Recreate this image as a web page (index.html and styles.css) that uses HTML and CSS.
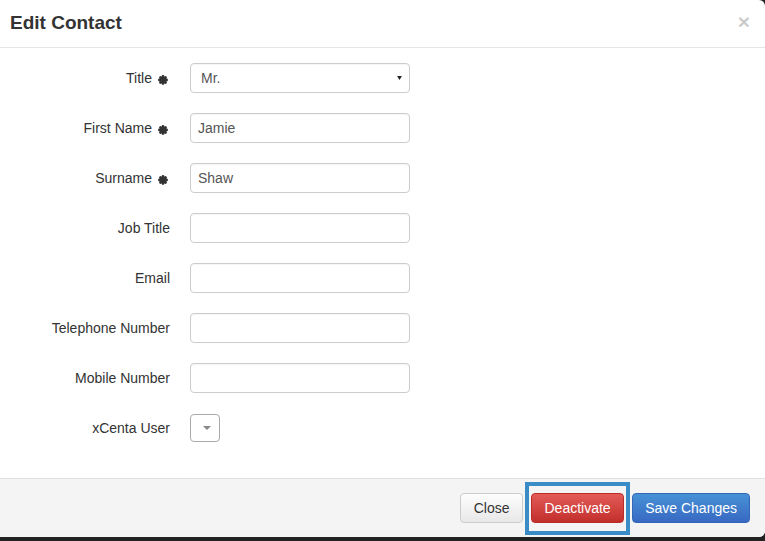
FILE: index.html
```html
<!DOCTYPE html>
<html lang="en">
<head>
<meta charset="utf-8">
<title>Edit Contact</title>
<link rel="stylesheet" href="styles.css">
</head>
<body>
<div class="modal">
  <div class="modal-header">
    <h4 class="modal-title">Edit Contact</h4>
    <span class="close">&times;</span>
  </div>
  <div class="modal-body">
    <div class="row">
      <label class="lbl">Title<svg class="req" viewBox="0 0 10 10"><g stroke="#333" stroke-width="2.8" stroke-linecap="round"><line x1="5" y1="1.4" x2="5" y2="8.6"/><line x1="1.4" y1="5" x2="8.6" y2="5"/><line x1="2.5" y1="2.5" x2="7.5" y2="7.5"/><line x1="7.5" y1="2.5" x2="2.5" y2="7.5"/></g></svg></label>
      <div class="select"><span>Mr.</span><svg class="caret" viewBox="0 0 6 5"><path d="M0 0H6L3 5Z" fill="#222"/></svg></div>
    </div>
    <div class="row">
      <label class="lbl">First Name<svg class="req" viewBox="0 0 10 10"><g stroke="#333" stroke-width="2.8" stroke-linecap="round"><line x1="5" y1="1.4" x2="5" y2="8.6"/><line x1="1.4" y1="5" x2="8.6" y2="5"/><line x1="2.5" y1="2.5" x2="7.5" y2="7.5"/><line x1="7.5" y1="2.5" x2="2.5" y2="7.5"/></g></svg></label>
      <div class="input">Jamie</div>
    </div>
    <div class="row">
      <label class="lbl">Surname<svg class="req" viewBox="0 0 10 10"><g stroke="#333" stroke-width="2.8" stroke-linecap="round"><line x1="5" y1="1.4" x2="5" y2="8.6"/><line x1="1.4" y1="5" x2="8.6" y2="5"/><line x1="2.5" y1="2.5" x2="7.5" y2="7.5"/><line x1="7.5" y1="2.5" x2="2.5" y2="7.5"/></g></svg></label>
      <div class="input">Shaw</div>
    </div>
    <div class="row">
      <label class="lbl">Job Title</label>
      <div class="input"></div>
    </div>
    <div class="row">
      <label class="lbl">Email</label>
      <div class="input"></div>
    </div>
    <div class="row">
      <label class="lbl">Telephone Number</label>
      <div class="input"></div>
    </div>
    <div class="row">
      <label class="lbl">Mobile Number</label>
      <div class="input"></div>
    </div>
    <div class="row">
      <label class="lbl">xCenta User</label>
      <div class="mini-select"><svg class="caret-grey" viewBox="0 0 8 4"><path d="M0 0H8L4 4Z" fill="#888"/></svg></div>
    </div>
  </div>
  <div class="modal-footer">
    <button class="btn btn-default">Close</button>
    <button class="btn btn-danger">Deactivate</button>
    <button class="btn btn-primary">Save Changes</button>
    <div class="highlight"></div>
  </div>
</div>
</body>
</html>
```

FILE: styles.css
```css
html, body {
  margin: 0;
  padding: 0;
}
body {
  background: #222;
  width: 765px;
  height: 541px;
  overflow: hidden;
  font-family: "Liberation Sans", Arial, sans-serif;
  font-size: 14px;
  color: #333;
}
.modal {
  width: 765px;
  height: 537px;
  background: #fff;
  border-radius: 0 6px 6px 0;
  overflow: hidden;
  display: flex;
  flex-direction: column;
}
.modal-header {
  height: 47px;
  flex: none;
  border-bottom: 1px solid #e5e5e5;
  display: flex;
  align-items: center;
  justify-content: space-between;
  padding: 0 16px 0 10px;
}
.modal-title {
  margin: 0;
  font-size: 19px;
  font-weight: bold;
  line-height: 1;
  padding-bottom: 2px;
  color: #333;
}
.close {
  font-size: 21px;
  font-weight: bold;
  line-height: 1;
  color: #000;
  opacity: 0.2;
  margin-top: -4px;
  margin-right: -1px;
}
.modal-body {
  flex: 1;
  padding: 15px 0;
}
.row {
  display: grid;
  grid-template-columns: 170px 220px;
  column-gap: 20px;
  height: 30px;
  margin-bottom: 20px;
  align-items: center;
}
.lbl {
  display: flex;
  justify-content: flex-end;
  align-items: center;
  color: #333;
  white-space: nowrap;
}
.req {
  width: 10px;
  height: 10px;
  margin: 4px 2px 0 6px;
}
.input, .select {
  height: 30px;
  box-sizing: border-box;
  border: 1px solid #ccc;
  border-radius: 4px;
  padding: 0 7px;
  display: flex;
  align-items: center;
  color: #555;
  box-shadow: inset 0 1px 1px rgba(0,0,0,0.04);
}
.select {
  padding: 0 6px 0 10px;
  justify-content: space-between;
}
.caret {
  width: 5px;
  height: 4px;
  margin-right: 1px;
}
.mini-select {
  width: 30px;
  height: 28px;
  box-sizing: border-box;
  border: 1px solid #aaa;
  border-radius: 4px;
  display: flex;
  align-items: center;
  justify-content: center;
  padding-left: 4px;
}
.caret-grey {
  width: 8px;
  height: 4px;
}
.modal-footer {
  position: relative;
  flex: none;
  border-top: 1px solid #e0e0e0;
  background: #f4f4f4;
  height: 59px;
  box-sizing: border-box;
  padding: 14px 15px 0;
  display: flex;
  justify-content: flex-end;
  align-items: flex-start;
  gap: 8px;
}
.btn {
  font-family: "Liberation Sans", Arial, sans-serif;
  font-size: 14px;
  line-height: 20px;
  height: 30px;
  box-sizing: border-box;
  padding: 4px 12px;
  border-radius: 4px;
  border: 1px solid #ccc;
  margin: 0;
}
.btn-default {
  color: #333;
  background: linear-gradient(#fdfdfd, #e8e8e8);
  border-color: #ccc;
  padding: 4px 12.5px;
}
.btn-danger {
  color: #fff;
  background: linear-gradient(#e35b57, #c22f2b);
  border-color: #b92c28;
  padding: 4px 12.5px;
}
.btn-primary {
  color: #fff;
  background: linear-gradient(#4791d6, #3869c3);
  border-color: #3366b5;
}
.highlight {
  position: absolute;
  left: 525px;
  top: 3px;
  width: 105px;
  height: 53px;
  box-sizing: border-box;
  border: 4px solid #3a8cc6;
}
```
